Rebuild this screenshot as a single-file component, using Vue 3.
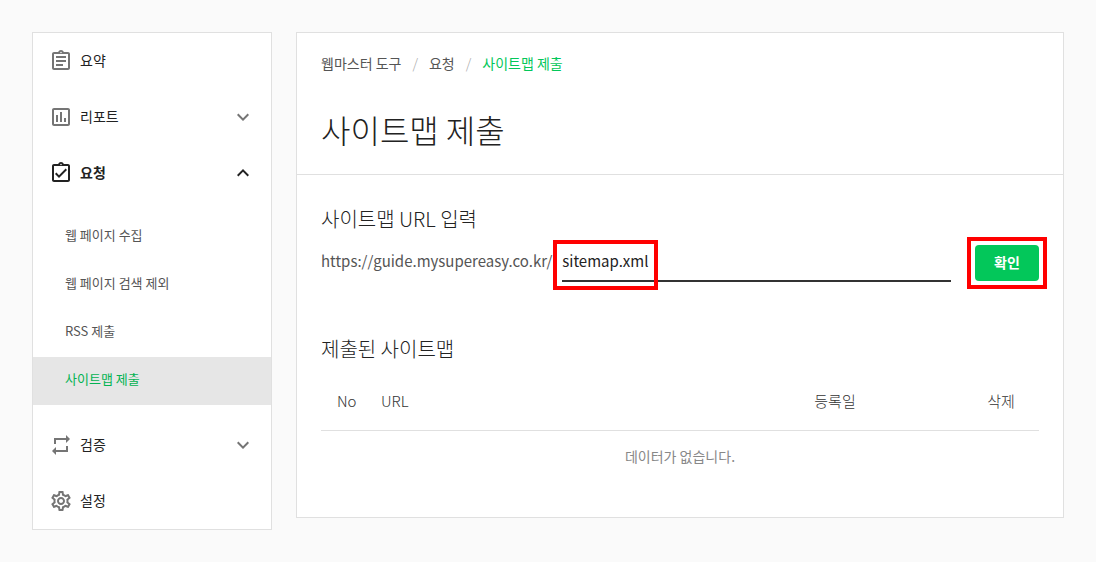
<script setup>
import { ref } from 'vue';

const icons = {
  summary: 'M7 15h7v2H7zm0-4h10v2H7zm0-4h10v2H7zm12-4h-4.18C14.4 1.84 13.3 1 12 1s-2.4.84-2.82 2H5c-1.1 0-2 .9-2 2v14c0 1.1.9 2 2 2h14c1.1 0 2-.9 2-2V5c0-1.1-.9-2-2-2zm-7-.25c.41 0 .75.34.75.75s-.34.75-.75.75-.75-.34-.75-.75.34-.75.75-.75zM19 19H5V5h14v14z',
  report: 'M19 3H5c-1.1 0-2 .9-2 2v14c0 1.1.9 2 2 2h14c1.1 0 2-.9 2-2V5c0-1.1-.9-2-2-2zm0 16H5V5h14v14zM7 10h2v7H7zm4-3h2v10h-2zm4 6h2v4h-2z',
  request: 'M18 9l-1.4-1.4-6.6 6.6-2.6-2.6L6 13l4 4zm1-6h-4.18C14.4 1.84 13.3 1 12 1s-2.4.84-2.82 2H5c-1.1 0-2 .9-2 2v14c0 1.1.9 2 2 2h14c1.1 0 2-.9 2-2V5c0-1.1-.9-2-2-2zm-7-.25c.41 0 .75.34.75.75s-.34.75-.75.75-.75-.34-.75-.75.34-.75.75-.75zM19 19H5V5h14v14z',
  verify: 'M7 7h10v3l4-4-4-4v3H5v6h2V7zm10 10H7v-3l-4 4 4 4v-3h12v-6h-2v4z',
  settings: 'M19.43 12.98c.04-.32.07-.64.07-.98 0-.34-.03-.66-.07-.98l2.110-1.650c.19-.15.24-.42.12-.64l-2-3.460c-.09-.16-.26-.25-.44-.25-.06 0-.12.01-.17.03l-2.490 1c-.52-.4-1.080-.73-1.690-.98l-.38-2.650C14.460 2.180 14.250 2 14 2h-4c-.25 0-.46.18-.49.42l-.38 2.650c-.61.25-1.170.59-1.690.98l-2.490-1c-.06-.02-.12-.03-.18-.03-.17 0-.34.09-.43.25l-2 3.460c-.13.22-.07.49.12.64l2.110 1.650c-.04.32-.07.65-.07.98 0 .33.03.66.07.98l-2.110 1.650c-.19.15-.24.42-.12.64l2 3.460c.09.16.26.25.44.25.06 0 .12-.01.17-.03l2.490-1c.52.4 1.080.73 1.690.98l.38 2.650c.03.24.24.42.49.42h4c.25 0 .46-.18.49-.42l.38-2.650c.61-.25 1.170-.59 1.690-.98l2.490 1c.06.02.12.03.18.03.17 0 .34-.09.43-.25l2-3.460c.12-.22.07-.49-.12-.64l-2.110-1.650zm-1.980-1.710c.04.31.05.52.05.73 0 .21-.02.43-.05.73l-.14 1.130.89.7 1.080.84-.7 1.210-1.270-.51-1.040-.42-.9.680c-.43.32-.84.56-1.250.73l-1.060.43-.16 1.130-.2 1.350h-1.400l-.19-1.350-.16-1.130-1.060-.43c-.43-.18-.83-.41-1.230-.71l-.91-.7-1.060.43-1.270.51-.7-1.210 1.080-.84.89-.7-.14-1.130c-.03-.31-.05-.54-.05-.74s.02-.43.05-.73l.14-1.130-.89-.7-1.080-.84.7-1.210 1.270.51 1.040.42.9-.68c.43-.32.84-.56 1.250-.73l1.060-.43.16-1.130.2-1.350h1.390l.19 1.350.16 1.130 1.060.43c.43.18.83.41 1.230.71l.91.7 1.060-.43 1.270-.51.7 1.210-1.070.85-.89.7.14 1.130zM12 8c-2.210 0-4 1.790-4 4s1.790 4 4 4 4-1.790 4-4-1.790-4-4-4zm0 6c-1.100 0-2-.9-2-2s.9-2 2-2 2 .9 2 2-.9 2-2 2z'
};

const menu = ref([
  { label: '요약', icon: 'summary' },
  { label: '리포트', icon: 'report', expandable: true, open: false },
  {
    label: '요청',
    icon: 'request',
    expandable: true,
    open: true,
    children: ['웹 페이지 수집', '웹 페이지 검색 제외', 'RSS 제출', '사이트맵 제출']
  },
  { label: '검증', icon: 'verify', expandable: true, open: false },
  { label: '설정', icon: 'settings' }
]);

const current = '사이트맵 제출';
const path = ref('sitemap.xml');

function toggle(item) {
  if (item.expandable) item.open = !item.open;
}
</script>

<template>
  <div class="page">
    <nav class="sidebar">
      <div v-for="item in menu" :key="item.label">
        <button type="button" class="menu-item" :class="{ open: item.open }" @click="toggle(item)">
          <svg class="icon" viewBox="0 0 24 24"><path :d="icons[item.icon]" /></svg>
          <span class="menu-label">{{ item.label }}</span>
          <svg v-if="item.expandable" class="icon" viewBox="0 0 24 24">
            <path v-if="item.open" d="M12 8l-6 6 1.410 1.410L12 10.830l4.590 4.580L18 14z" />
            <path v-else d="M16.590 8.590L12 13.170 7.410 8.590 6 10l6 6 6-6z" />
          </svg>
        </button>
        <ul v-if="item.open && item.children" class="submenu">
          <li v-for="child in item.children" :key="child">
            <a href="#" :class="{ active: child === current }">{{ child }}</a>
          </li>
        </ul>
      </div>
    </nav>

    <main class="content">
      <header class="content-header">
        <div class="breadcrumb">
          <a href="#">웹마스터 도구</a>
          <span class="slash">/</span>
          <a href="#">요청</a>
          <span class="slash">/</span>
          <a href="#" class="active">{{ current }}</a>
        </div>
        <h1>{{ current }}</h1>
      </header>

      <section class="submit">
        <h2>사이트맵 URL 입력</h2>
        <form class="url-form" @submit.prevent>
          <label for="sitemap-path">https://guide.mysupereasy.co.kr/</label>
          <div class="field">
            <input id="sitemap-path" v-model="path" type="text" />
            <span class="mark mark-field"></span>
          </div>
          <div class="action">
            <button type="submit" class="confirm">확인</button>
            <span class="mark mark-action"></span>
          </div>
        </form>
      </section>

      <section class="submitted">
        <h2>제출된 사이트맵</h2>
        <table>
          <thead>
            <tr>
              <th class="col-no">No</th>
              <th class="col-url">URL</th>
              <th class="col-date">등록일</th>
              <th class="col-delete">삭제</th>
            </tr>
          </thead>
          <tbody>
            <tr>
              <td colspan="4">데이터가 없습니다.</td>
            </tr>
          </tbody>
        </table>
      </section>
    </main>
  </div>
</template>

<style>
body { margin: 0; background: #fafafa; }
</style>

<style scoped>
.page, .page * { box-sizing: border-box; }
.page {
  display: flex;
  align-items: flex-start;
  gap: 24px;
  padding: 32px;
  font-family: "Noto Sans CJK KR", sans-serif;
  font-weight: 300;
  color: #222;
}
button, input { font: inherit; color: inherit; }
a { color: inherit; text-decoration: none; }
h1, h2 { margin: 0; font-weight: 300; }

.sidebar { flex: 0 0 240px; background: #fff; border: 1px solid #e0e0e0; }
.menu-item {
  display: flex;
  align-items: center;
  width: 100%;
  height: 56px;
  padding: 0 16px;
  border: 0;
  background: none;
  text-align: left;
  font-size: 14px;
  font-weight: 400;
  line-height: 20px;
  cursor: pointer;
}
.menu-item.open { font-weight: 700; }
.menu-label { flex: 1; margin-left: 7px; padding-bottom: 2px; }
.icon { width: 24px; height: 24px; fill: #757575; }
.menu-item.open .icon { fill: #222; }
.submenu { margin: 0; padding: 12px 0; list-style: none; }
.submenu a {
  display: block;
  padding: 0 32px 4px;
  font-size: 13px;
  line-height: 44px;
  color: #555;
  font-weight: 400;
}
.submenu a.active { background: #e6e6e6; color: #03b352; }

.content { flex: 1; min-width: 0; background: #fff; border: 1px solid #e0e0e0; }
.content-header { padding: 18px 24px 21px; border-bottom: 1px solid #e0e0e0; }
.breadcrumb {
  display: flex;
  gap: 11px;
  margin-bottom: 30px;
  font-size: 14px;
  line-height: 24px;
  font-weight: 400;
  color: #555;
}
.breadcrumb .active { color: #03c75a; }
.slash { color: #aaa; font-weight: 300; }
h1 { font-size: 32px; line-height: 48px; }
h2 { font-size: 20px; line-height: 28px; }

.submit { padding: 30px 24px 0; }
.url-form { display: flex; align-items: flex-start; padding-top: 8px; }
.url-form label {
  padding-right: 10px;
  font-size: 15px;
  font-weight: 400;
  line-height: 40px;
  color: #555;
}
.field { position: relative; flex: 1; }
.field input {
  display: block;
  width: 100%;
  height: 41px;
  padding: 0;
  border: 0;
  border-bottom: 2px solid #333;
  background: none;
  outline: none;
  font-size: 15px;
  font-weight: 400;
}
.action { position: relative; margin: 4px 0 0 24px; }
.confirm {
  display: block;
  width: 64px;
  height: 36px;
  padding: 0 0 2px;
  border: 0;
  border-radius: 4px;
  background: #03c75a;
  color: #fff;
  font-size: 14px;
  font-weight: 700;
  cursor: pointer;
}
.mark { position: absolute; border: 4px solid #f00; pointer-events: none; }
.mark-field { top: -1px; left: -9px; width: 105px; height: 50px; }
.mark-action { inset: -8px; }

.submitted { padding: 53px 24px 35px; }
table { width: 100%; margin-top: 8px; border-collapse: collapse; table-layout: fixed; }
th { height: 59px; padding: 0; font-size: 15px; font-weight: 300; color: #333; border-bottom: 1px solid #e0e0e0; }
.col-no { width: 60px; padding-left: 16px; text-align: left; }
.col-url { text-align: left; }
.col-date { width: 256px; }
.col-delete { width: 76px; }
td { height: 52px; padding: 0; font-size: 14px; font-weight: 400; text-align: center; color: #888; }
</style>
